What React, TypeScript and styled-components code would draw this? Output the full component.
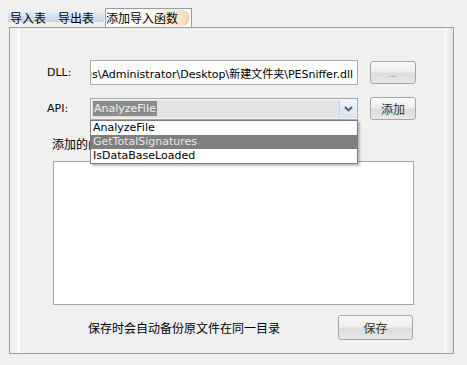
import React from 'react';
import styled, { createGlobalStyle } from 'styled-components';

const LATIN = `"DejaVu Sans", "Noto Sans CJK SC", sans-serif`;
const CJK = `"Noto Sans CJK SC", "DejaVu Sans", sans-serif`;
const FIELD_W = '268px';

const GlobalStyle = createGlobalStyle`
  body {
    margin: 0;
    background: #f0f0f0;
    font-family: ${LATIN};
    color: #000;
  }
`;

const Window = styled.div`
  width: 467px;
  height: 365px;
  padding-top: 8px;
  box-sizing: border-box;
  background: #f0f0f0;
  overflow: hidden;
`;

const TabStrip = styled.div`
  display: flex;
  align-items: stretch;
  height: 19px;
  margin-left: 8px;
`;

const Tab = styled.div`
  width: 48px;
  padding-left: 2px;
  box-sizing: border-box;
  font-family: ${CJK};
  font-size: 12px;
  line-height: 19px;
  background: linear-gradient(to bottom, #e4ecf7, #c3d4ea) no-repeat center 4px / 100% 10px;
`;

const ActiveTab = styled.div`
  margin-left: 1px;
  width: 87px;
  box-sizing: border-box;
  border: 1px solid #9c9c9c;
  border-bottom: none;
  background: #f7f7f7;
  padding: 1px 2px 1px 0;
  display: flex;
`;

const TabPill = styled.span`
  flex: 1;
  font-family: ${CJK};
  font-size: 12px;
  line-height: 16px;
  border-radius: 0 8px 8px 0;
  border-right: 1px solid #dfb68c;
  background: linear-gradient(to right, #ffffff 0%, #fdf6ee 60%, #f4dcc0 100%);
  padding-left: 0;
`;

const Panel = styled.div`
  position: relative;
  margin-left: 9px;
  width: 445px;
  height: 327px;
  box-sizing: border-box;
  border: 1px solid #9c9c9c;
  background: linear-gradient(
    to right,
    #f0f0f0 0 7px,
    #fafafa 7px 10px,
    #f0f0f0 10px calc(100% - 9px),
    #fbfbfb calc(100% - 9px),
    #e6e6e6 calc(100% - 1px)
  );
  padding: 32px 0 0 37px;
`;

const Row = styled.div<{ $gap?: number }>`
  display: flex;
  align-items: center;
  margin-top: ${(p) => p.$gap ?? 0}px;
`;

const Label = styled.div`
  width: 43px;
  font-size: 11px;
`;

const PathField = styled.div`
  width: ${FIELD_W};
  height: 25px;
  box-sizing: border-box;
  border: 1px solid #a9a9a9;
  background: #fdfdfd;
  display: flex;
  align-items: center;
  justify-content: flex-end;
  overflow: hidden;
  padding-right: 4px;
  white-space: nowrap;
  font-size: 11px;
`;

const Button = styled.button<{ $w: number; $h: number; $muted?: boolean }>`
  width: ${(p) => p.$w}px;
  height: ${(p) => p.$h}px;
  margin-left: 12px;
  padding: 0;
  border: 1px solid #a6a6a6;
  border-radius: 3px;
  background: linear-gradient(to bottom, #fbfbfb 0%, #eeeeee 45%, #dcdcdc 55%, #e8e8e8 100%);
  font-family: ${CJK};
  font-size: ${(p) => (p.$muted ? 10 : 12)}px;
  color: ${(p) => (p.$muted ? '#8a8a8a' : '#333')};
`;

const ComboWrap = styled.div`
  position: relative;
  width: ${FIELD_W};
  height: 22px;
`;

const Combo = styled.div`
  height: 100%;
  box-sizing: border-box;
  border: 1px solid #a4a9b0;
  background: #e3e3e3;
  box-shadow: inset 0 0 0 1px #f4f4f4;
  display: flex;
  align-items: center;
  padding-left: 2px;
`;

const Selected = styled.span`
  flex: 1;
  font-size: 11px;
  line-height: 16px;
  span {
    background: #8c8c8c;
    color: #f2f2f2;
    padding: 1px 1px;
  }
`;

const ArrowButton = styled.div`
  width: 16px;
  height: 18px;
  margin-right: 1px;
  background: linear-gradient(to bottom, #edf3fb, #d5e3f3);
  border-left: 1px solid #c5d3e3;
  display: flex;
  align-items: center;
  justify-content: center;
`;

const DropList = styled.div`
  position: absolute;
  top: 100%;
  left: 0;
  width: 100%;
  box-sizing: border-box;
  border: 1px solid #7c7c7c;
  background: #fff;
  box-shadow: 2px 2px 2px rgba(0, 0, 0, 0.25);
  z-index: 5;
`;

const DropItem = styled.div<{ $active?: boolean }>`
  height: 14px;
  line-height: 14px;
  padding-left: 2px;
  font-size: 11px;
  background: ${(p) => (p.$active ? '#7f7f7f' : 'transparent')};
  color: ${(p) => (p.$active ? '#e9e9e9' : '#000')};
`;

const SectionLabel = styled.div`
  margin: 16px 0 0 5px;
  font-family: ${CJK};
  font-size: 12px;
  line-height: 16px;
`;

const ListBox = styled.div`
  margin: 9px 0 0 6px;
  width: 361px;
  height: 144px;
  box-sizing: border-box;
  border: 1px solid #a5a5a5;
  background: #fff;
`;

const Footer = styled.div`
  display: flex;
  align-items: center;
  margin-top: 10px;
  padding-left: 41px;
`;

const Note = styled.div`
  width: 238px;
  font-family: ${CJK};
  font-size: 12px;
`;

const functions = ['AnalyzeFile', 'GetTotalSignatures', 'IsDataBaseLoaded'];

export default function App() {
  return (
    <>
      <GlobalStyle />
      <Window>
        <TabStrip>
          <Tab>导入表</Tab>
          <Tab>导出表</Tab>
          <ActiveTab>
            <TabPill>添加导入函数</TabPill>
          </ActiveTab>
        </TabStrip>
        <Panel>
          <Row>
            <Label>DLL:</Label>
            <PathField>C:\Documents and Settings\Administrator\Desktop\新建文件夹\PESniffer.dll</PathField>
            <Button $w={46} $h={23} $muted>...</Button>
          </Row>
          <Row $gap={12}>
            <Label>API:</Label>
            <ComboWrap>
              <Combo>
                <Selected>
                  <span>AnalyzeFile</span>
                </Selected>
                <ArrowButton>
                  <svg width="9" height="6" viewBox="0 0 9 6">
                    <path d="M1 1 L4.5 4.5 L8 1" fill="none" stroke="#4b5868" strokeWidth="1.8" />
                  </svg>
                </ArrowButton>
              </Combo>
              <DropList>
                {functions.map((f) => (
                  <DropItem key={f} $active={f === 'GetTotalSignatures'}>
                    {f}
                  </DropItem>
                ))}
              </DropList>
            </ComboWrap>
            <Button $w={46} $h={23}>添加</Button>
          </Row>
          <SectionLabel>添加的函数：</SectionLabel>
          <ListBox />
          <Footer>
            <Note>保存时会自动备份原文件在同一目录</Note>
            <Button $w={75} $h={25}>保存</Button>
          </Footer>
        </Panel>
      </Window>
    </>
  );
}
